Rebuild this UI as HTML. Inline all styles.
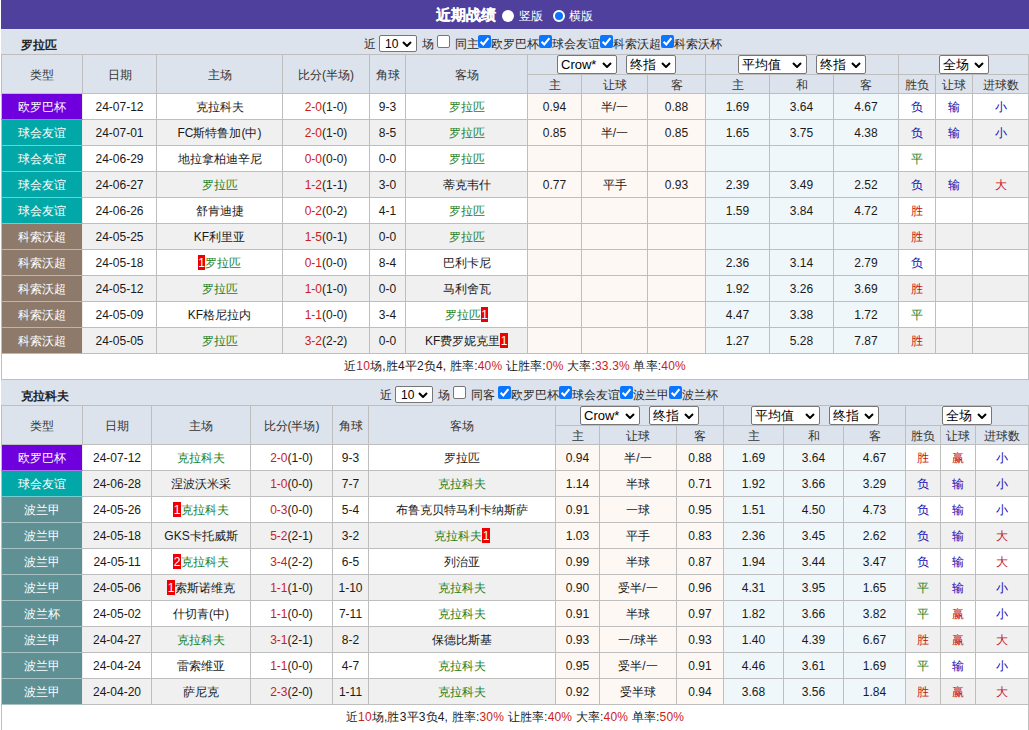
<!DOCTYPE html>
<html><head><meta charset="utf-8"><style>
*{margin:0;padding:0;box-sizing:border-box}
html,body{background:#fff;width:1029px;height:730px;overflow:hidden;position:relative}
body{font-family:"Liberation Sans",sans-serif;font-size:12px;color:#1a1a1a}
.a{position:absolute;line-height:12px;white-space:nowrap;color:#2a2a2a}
.a b{color:#222}
.top{position:absolute;left:1px;top:0;width:1028px;height:30px;background:#50409d;border-bottom:1px solid #e4e4ff}
.tt{font-size:15px;color:#fff}
.tt b{color:#fff;-webkit-text-stroke:0.2px #fff}
.tw{color:#fff}
.rd0,.rd1{width:12px;height:12px;border-radius:50%;background:#fff}
.rd1{background:#0a75ff;border:2px solid #fff}
.sec{position:absolute;left:1px;width:1028px;background:#dde3ec}
.sel{display:inline-block;height:19px;border:1px solid #767676;border-radius:2px;background:#fff;vertical-align:top;line-height:17px;padding-left:3px;text-align:left;position:relative;font-size:13px;color:#000}
.a.sel{position:absolute}
.sel .chev{position:absolute;right:4px;top:6px}
.sel.sm{font-size:12px;line-height:17px;padding-left:5px}
.sel.sm .chev{right:4px;top:5px}
.cb{width:13px;height:13px;border:1px solid #767676;border-radius:2px;background:#fff}
.cb.on{background:#0a75ff;border:0}
.cb svg{position:absolute;left:0;top:0}
table.t{position:absolute;left:1px;border-collapse:collapse;table-layout:fixed;width:1028px}
.t td{border:1px solid #bebebe;text-align:center;height:26px;padding:0;white-space:nowrap;overflow:hidden;line-height:12px}
.t tr.h1 td{background:#dde3ec;height:20px;vertical-align:top;color:#333}
.t tr.h1 td[rowspan]{vertical-align:middle;padding-top:2px}
.t tr.h2 td{background:#dde3ec;height:19px;padding-top:2px;color:#333}
.t tr.alt td{background:#f0f0f0}
.t td.ty{color:#fff;border-right-color:#ececec}
.t td.oa,.t tr.alt td.oa{background:#fdf8f4}
.t td.oe,.t tr.alt td.oe{background:#f0f7fb}
.gr,.rd{color:#1e801e}
.sc,em{font-style:normal;color:#cc1c1c}
.rw{color:#c81010}
.rl{color:#0c0cb4}
.bd{font-style:normal;background:#e00;color:#fff;padding:1px 0.5px 0}
.sum{position:absolute;left:1px;width:1028px;height:26px;line-height:25px;text-align:center;background:#fff;border-left:1px solid #bebebe;border-right:1px solid #bebebe;border-bottom:1px solid #bebebe;letter-spacing:0.18px}

</style></head><body>
<div class="top"></div><span class="a tt" style="left:436px;top:9px"><b>近期战绩</b></span><span class="a rd0" style="left:502px;top:10px"></span><span class="a tw" style="left:519px;top:10px">竖版</span><span class="a rd1" style="left:553px;top:10px"></span><span class="a tw" style="left:569px;top:10px">横版</span>
<div class="sec" style="top:30px;height:24px"></div>
<span class="a" style="left:21px;top:39px"><b>罗拉匹</b></span><span class="a" style="left:364px;top:38px">近</span><span class="a sel sm" style="left:379px;top:35px;width:38px;height:17px">10<svg class="chev" width="10" height="6" viewBox="0 0 10 6"><path d="M1 1L5 5L9 1" fill="none" stroke="#000" stroke-width="2"/></svg></span><span class="a" style="left:422px;top:38px">场</span><span class="a cb" style="left:437px;top:35px"></span><span class="a" style="left:455px;top:38px">同主</span><span class="a cb on" style="left:478px;top:35px"><svg width="13" height="13" viewBox="0 0 13 13"><path d="M2.6 6.8L5.3 9.5L10.4 3.2" fill="none" stroke="#fff" stroke-width="2.1"/></svg></span><span class="a" style="left:491px;top:38px">欧罗巴杯</span><span class="a cb on" style="left:539px;top:35px"><svg width="13" height="13" viewBox="0 0 13 13"><path d="M2.6 6.8L5.3 9.5L10.4 3.2" fill="none" stroke="#fff" stroke-width="2.1"/></svg></span><span class="a" style="left:552px;top:38px">球会友谊</span><span class="a cb on" style="left:600px;top:35px"><svg width="13" height="13" viewBox="0 0 13 13"><path d="M2.6 6.8L5.3 9.5L10.4 3.2" fill="none" stroke="#fff" stroke-width="2.1"/></svg></span><span class="a" style="left:613px;top:38px">科索沃超</span><span class="a cb on" style="left:661px;top:35px"><svg width="13" height="13" viewBox="0 0 13 13"><path d="M2.6 6.8L5.3 9.5L10.4 3.2" fill="none" stroke="#fff" stroke-width="2.1"/></svg></span><span class="a" style="left:674px;top:38px">科索沃杯</span>
<table class="t" style="top:54px"><colgroup><col style="width:81px"><col style="width:74px"><col style="width:126px"><col style="width:87px"><col style="width:36px"><col style="width:122px"><col style="width:54px"><col style="width:66px"><col style="width:58px"><col style="width:64px"><col style="width:64px"><col style="width:65px"><col style="width:37px"><col style="width:37px"><col style="width:56px"></colgroup>
<tr class="h1"><td rowspan="2">类型</td><td rowspan="2">日期</td><td rowspan="2">主场</td><td rowspan="2">比分(半场)</td><td rowspan="2">角球</td><td rowspan="2">客场</td><td colspan="3"><span class="sel" style="width:60px">Crow*<svg class="chev" width="10" height="6" viewBox="0 0 10 6"><path d="M1 1L5 5L9 1" fill="none" stroke="#000" stroke-width="2"/></svg></span><span class="sel" style="width:50px;margin-left:9px">终指<svg class="chev" width="10" height="6" viewBox="0 0 10 6"><path d="M1 1L5 5L9 1" fill="none" stroke="#000" stroke-width="2"/></svg></span></td><td colspan="3"><span class="sel" style="width:69px">平均值<svg class="chev" width="10" height="6" viewBox="0 0 10 6"><path d="M1 1L5 5L9 1" fill="none" stroke="#000" stroke-width="2"/></svg></span><span class="sel" style="width:50px;margin-left:9px">终指<svg class="chev" width="10" height="6" viewBox="0 0 10 6"><path d="M1 1L5 5L9 1" fill="none" stroke="#000" stroke-width="2"/></svg></span></td><td colspan="3"><span class="sel" style="width:50px">全场<svg class="chev" width="10" height="6" viewBox="0 0 10 6"><path d="M1 1L5 5L9 1" fill="none" stroke="#000" stroke-width="2"/></svg></span></td></tr>
<tr class="h2"><td>主</td><td>让球</td><td>客</td><td>主</td><td>和</td><td>客</td><td>胜负</td><td>让球</td><td>进球数</td></tr>
<tr>
<td class="ty" style="background:#6f00dd;border-bottom-color:#af72ec">欧罗巴杯</td>
<td>24-07-12</td>
<td>克拉科夫</td>
<td><span class="sc">2-0</span>(1-0)</td>
<td>9-3</td>
<td><span class="gr">罗拉匹</span></td>
<td class="oa">0.94</td>
<td class="oa">半/一</td>
<td class="oa">0.88</td>
<td class="oe">1.69</td>
<td class="oe">3.64</td>
<td class="oe">4.67</td>
<td><span class="rl">负</span></td>
<td><span class="rl">输</span></td>
<td><span class="rl">小</span></td>
</tr>
<tr class="alt">
<td class="ty" style="background:#02a8a8;border-bottom-color:#73cfcf">球会友谊</td>
<td>24-07-01</td>
<td>FC斯特鲁加(中)</td>
<td><span class="sc">2-0</span>(1-0)</td>
<td>8-5</td>
<td><span class="gr">罗拉匹</span></td>
<td class="oa">0.85</td>
<td class="oa">半/一</td>
<td class="oa">0.85</td>
<td class="oe">1.65</td>
<td class="oe">3.75</td>
<td class="oe">4.38</td>
<td><span class="rl">负</span></td>
<td><span class="rl">输</span></td>
<td><span class="rl">小</span></td>
</tr>
<tr>
<td class="ty" style="background:#02a8a8;border-bottom-color:#73cfcf">球会友谊</td>
<td>24-06-29</td>
<td>地拉拿柏迪辛尼</td>
<td><span class="sc">0-0</span>(0-0)</td>
<td>0-0</td>
<td><span class="gr">罗拉匹</span></td>
<td class="oa"></td>
<td class="oa"></td>
<td class="oa"></td>
<td class="oe"></td>
<td class="oe"></td>
<td class="oe"></td>
<td><span class="rd">平</span></td>
<td></td>
<td></td>
</tr>
<tr class="alt">
<td class="ty" style="background:#02a8a8;border-bottom-color:#73cfcf">球会友谊</td>
<td>24-06-27</td>
<td><span class="gr">罗拉匹</span></td>
<td><span class="sc">1-2</span>(1-1)</td>
<td>3-0</td>
<td>蒂克韦什</td>
<td class="oa">0.77</td>
<td class="oa">平手</td>
<td class="oa">0.93</td>
<td class="oe">2.39</td>
<td class="oe">3.49</td>
<td class="oe">2.52</td>
<td><span class="rl">负</span></td>
<td><span class="rl">输</span></td>
<td><span class="rw">大</span></td>
</tr>
<tr>
<td class="ty" style="background:#02a8a8;border-bottom-color:#73cfcf">球会友谊</td>
<td>24-06-26</td>
<td>舒肯迪捷</td>
<td><span class="sc">0-2</span>(0-2)</td>
<td>4-1</td>
<td><span class="gr">罗拉匹</span></td>
<td class="oa"></td>
<td class="oa"></td>
<td class="oa"></td>
<td class="oe">1.59</td>
<td class="oe">3.84</td>
<td class="oe">4.72</td>
<td><span class="rw">胜</span></td>
<td></td>
<td></td>
</tr>
<tr class="alt">
<td class="ty" style="background:#8e7a6a;border-bottom-color:#c0b5ad">科索沃超</td>
<td>24-05-25</td>
<td>KF利里亚</td>
<td><span class="sc">1-5</span>(0-1)</td>
<td>0-0</td>
<td><span class="gr">罗拉匹</span></td>
<td class="oa"></td>
<td class="oa"></td>
<td class="oa"></td>
<td class="oe"></td>
<td class="oe"></td>
<td class="oe"></td>
<td><span class="rw">胜</span></td>
<td></td>
<td></td>
</tr>
<tr>
<td class="ty" style="background:#8e7a6a;border-bottom-color:#c0b5ad">科索沃超</td>
<td>24-05-18</td>
<td><i class="bd">1</i><span class="gr">罗拉匹</span></td>
<td><span class="sc">0-1</span>(0-0)</td>
<td>8-4</td>
<td>巴利卡尼</td>
<td class="oa"></td>
<td class="oa"></td>
<td class="oa"></td>
<td class="oe">2.36</td>
<td class="oe">3.14</td>
<td class="oe">2.79</td>
<td><span class="rl">负</span></td>
<td></td>
<td></td>
</tr>
<tr class="alt">
<td class="ty" style="background:#8e7a6a;border-bottom-color:#c0b5ad">科索沃超</td>
<td>24-05-12</td>
<td><span class="gr">罗拉匹</span></td>
<td><span class="sc">1-0</span>(1-0)</td>
<td>0-0</td>
<td>马利舍瓦</td>
<td class="oa"></td>
<td class="oa"></td>
<td class="oa"></td>
<td class="oe">1.92</td>
<td class="oe">3.26</td>
<td class="oe">3.69</td>
<td><span class="rw">胜</span></td>
<td></td>
<td></td>
</tr>
<tr>
<td class="ty" style="background:#8e7a6a;border-bottom-color:#c0b5ad">科索沃超</td>
<td>24-05-09</td>
<td>KF格尼拉内</td>
<td><span class="sc">1-1</span>(0-0)</td>
<td>3-4</td>
<td><span class="gr">罗拉匹</span><i class="bd">1</i></td>
<td class="oa"></td>
<td class="oa"></td>
<td class="oa"></td>
<td class="oe">4.47</td>
<td class="oe">3.38</td>
<td class="oe">1.72</td>
<td><span class="rd">平</span></td>
<td></td>
<td></td>
</tr>
<tr class="alt">
<td class="ty" style="background:#8e7a6a;border-bottom-color:#c0b5ad">科索沃超</td>
<td>24-05-05</td>
<td><span class="gr">罗拉匹</span></td>
<td><span class="sc">3-2</span>(2-2)</td>
<td>0-0</td>
<td>KF费罗妮克里<i class="bd">1</i></td>
<td class="oa"></td>
<td class="oa"></td>
<td class="oa"></td>
<td class="oe">1.27</td>
<td class="oe">5.28</td>
<td class="oe">7.87</td>
<td><span class="rw">胜</span></td>
<td></td>
<td></td>
</tr>
</table>
<div class="sum" style="top:354px">近<em>10</em>场,胜4平2负4, 胜率:<em>40%</em> 让胜率:<em>0%</em> 大率:<em>33.3%</em> 单率:<em>40%</em></div>
<div class="sec" style="top:380px;height:25px"></div>
<span class="a" style="left:21px;top:390px"><b>克拉科夫</b></span><span class="a" style="left:380px;top:389px">近</span><span class="a sel sm" style="left:395px;top:386px;width:38px;height:17px">10<svg class="chev" width="10" height="6" viewBox="0 0 10 6"><path d="M1 1L5 5L9 1" fill="none" stroke="#000" stroke-width="2"/></svg></span><span class="a" style="left:438px;top:389px">场</span><span class="a cb" style="left:453px;top:386px"></span><span class="a" style="left:471px;top:389px">同客</span><span class="a cb on" style="left:498px;top:386px"><svg width="13" height="13" viewBox="0 0 13 13"><path d="M2.6 6.8L5.3 9.5L10.4 3.2" fill="none" stroke="#fff" stroke-width="2.1"/></svg></span><span class="a" style="left:511px;top:389px">欧罗巴杯</span><span class="a cb on" style="left:559px;top:386px"><svg width="13" height="13" viewBox="0 0 13 13"><path d="M2.6 6.8L5.3 9.5L10.4 3.2" fill="none" stroke="#fff" stroke-width="2.1"/></svg></span><span class="a" style="left:572px;top:389px">球会友谊</span><span class="a cb on" style="left:620px;top:386px"><svg width="13" height="13" viewBox="0 0 13 13"><path d="M2.6 6.8L5.3 9.5L10.4 3.2" fill="none" stroke="#fff" stroke-width="2.1"/></svg></span><span class="a" style="left:633px;top:389px">波兰甲</span><span class="a cb on" style="left:669px;top:386px"><svg width="13" height="13" viewBox="0 0 13 13"><path d="M2.6 6.8L5.3 9.5L10.4 3.2" fill="none" stroke="#fff" stroke-width="2.1"/></svg></span><span class="a" style="left:682px;top:389px">波兰杯</span>
<table class="t" style="top:405px"><colgroup><col style="width:81px"><col style="width:69px"><col style="width:99px"><col style="width:82px"><col style="width:36px"><col style="width:187px"><col style="width:44px"><col style="width:77px"><col style="width:47px"><col style="width:60px"><col style="width:60px"><col style="width:62px"><col style="width:35px"><col style="width:35px"><col style="width:53px"></colgroup>
<tr class="h1"><td rowspan="2">类型</td><td rowspan="2">日期</td><td rowspan="2">主场</td><td rowspan="2">比分(半场)</td><td rowspan="2">角球</td><td rowspan="2">客场</td><td colspan="3"><span class="sel" style="width:60px">Crow*<svg class="chev" width="10" height="6" viewBox="0 0 10 6"><path d="M1 1L5 5L9 1" fill="none" stroke="#000" stroke-width="2"/></svg></span><span class="sel" style="width:50px;margin-left:9px">终指<svg class="chev" width="10" height="6" viewBox="0 0 10 6"><path d="M1 1L5 5L9 1" fill="none" stroke="#000" stroke-width="2"/></svg></span></td><td colspan="3"><span class="sel" style="width:69px">平均值<svg class="chev" width="10" height="6" viewBox="0 0 10 6"><path d="M1 1L5 5L9 1" fill="none" stroke="#000" stroke-width="2"/></svg></span><span class="sel" style="width:50px;margin-left:9px">终指<svg class="chev" width="10" height="6" viewBox="0 0 10 6"><path d="M1 1L5 5L9 1" fill="none" stroke="#000" stroke-width="2"/></svg></span></td><td colspan="3"><span class="sel" style="width:50px">全场<svg class="chev" width="10" height="6" viewBox="0 0 10 6"><path d="M1 1L5 5L9 1" fill="none" stroke="#000" stroke-width="2"/></svg></span></td></tr>
<tr class="h2"><td>主</td><td>让球</td><td>客</td><td>主</td><td>和</td><td>客</td><td>胜负</td><td>让球</td><td>进球数</td></tr>
<tr>
<td class="ty" style="background:#6f00dd;border-bottom-color:#af72ec">欧罗巴杯</td>
<td>24-07-12</td>
<td><span class="gr">克拉科夫</span></td>
<td><span class="sc">2-0</span>(1-0)</td>
<td>9-3</td>
<td>罗拉匹</td>
<td class="oa">0.94</td>
<td class="oa">半/一</td>
<td class="oa">0.88</td>
<td class="oe">1.69</td>
<td class="oe">3.64</td>
<td class="oe">4.67</td>
<td><span class="rw">胜</span></td>
<td><span class="rw">赢</span></td>
<td><span class="rl">小</span></td>
</tr>
<tr class="alt">
<td class="ty" style="background:#02a8a8;border-bottom-color:#73cfcf">球会友谊</td>
<td>24-06-28</td>
<td>涅波沃米采</td>
<td><span class="sc">1-0</span>(0-0)</td>
<td>7-7</td>
<td><span class="gr">克拉科夫</span></td>
<td class="oa">1.14</td>
<td class="oa">半球</td>
<td class="oa">0.71</td>
<td class="oe">1.92</td>
<td class="oe">3.66</td>
<td class="oe">3.29</td>
<td><span class="rl">负</span></td>
<td><span class="rl">输</span></td>
<td><span class="rl">小</span></td>
</tr>
<tr>
<td class="ty" style="background:#5f9194;border-bottom-color:#a7c2c4">波兰甲</td>
<td>24-05-26</td>
<td><i class="bd">1</i><span class="gr">克拉科夫</span></td>
<td><span class="sc">0-3</span>(0-0)</td>
<td>5-4</td>
<td>布鲁克贝特马利卡纳斯萨</td>
<td class="oa">0.91</td>
<td class="oa">一球</td>
<td class="oa">0.95</td>
<td class="oe">1.51</td>
<td class="oe">4.50</td>
<td class="oe">4.73</td>
<td><span class="rl">负</span></td>
<td><span class="rl">输</span></td>
<td><span class="rl">小</span></td>
</tr>
<tr class="alt">
<td class="ty" style="background:#5f9194;border-bottom-color:#a7c2c4">波兰甲</td>
<td>24-05-18</td>
<td>GKS卡托威斯</td>
<td><span class="sc">5-2</span>(2-1)</td>
<td>3-2</td>
<td><span class="gr">克拉科夫</span><i class="bd">1</i></td>
<td class="oa">1.03</td>
<td class="oa">平手</td>
<td class="oa">0.83</td>
<td class="oe">2.36</td>
<td class="oe">3.45</td>
<td class="oe">2.62</td>
<td><span class="rl">负</span></td>
<td><span class="rl">输</span></td>
<td><span class="rw">大</span></td>
</tr>
<tr>
<td class="ty" style="background:#5f9194;border-bottom-color:#a7c2c4">波兰甲</td>
<td>24-05-11</td>
<td><i class="bd">2</i><span class="gr">克拉科夫</span></td>
<td><span class="sc">3-4</span>(2-2)</td>
<td>6-5</td>
<td>列治亚</td>
<td class="oa">0.99</td>
<td class="oa">半球</td>
<td class="oa">0.87</td>
<td class="oe">1.94</td>
<td class="oe">3.44</td>
<td class="oe">3.47</td>
<td><span class="rl">负</span></td>
<td><span class="rl">输</span></td>
<td><span class="rw">大</span></td>
</tr>
<tr class="alt">
<td class="ty" style="background:#5f9194;border-bottom-color:#a7c2c4">波兰甲</td>
<td>24-05-06</td>
<td><i class="bd">1</i>索斯诺维克</td>
<td><span class="sc">1-1</span>(1-0)</td>
<td>1-10</td>
<td><span class="gr">克拉科夫</span></td>
<td class="oa">0.90</td>
<td class="oa">受半/一</td>
<td class="oa">0.96</td>
<td class="oe">4.31</td>
<td class="oe">3.95</td>
<td class="oe">1.65</td>
<td><span class="rd">平</span></td>
<td><span class="rl">输</span></td>
<td><span class="rl">小</span></td>
</tr>
<tr>
<td class="ty" style="background:#5f9194;border-bottom-color:#a7c2c4">波兰杯</td>
<td>24-05-02</td>
<td>什切青(中)</td>
<td><span class="sc">1-1</span>(0-0)</td>
<td>7-11</td>
<td><span class="gr">克拉科夫</span></td>
<td class="oa">0.91</td>
<td class="oa">半球</td>
<td class="oa">0.97</td>
<td class="oe">1.82</td>
<td class="oe">3.66</td>
<td class="oe">3.82</td>
<td><span class="rd">平</span></td>
<td><span class="rw">赢</span></td>
<td><span class="rl">小</span></td>
</tr>
<tr class="alt">
<td class="ty" style="background:#5f9194;border-bottom-color:#a7c2c4">波兰甲</td>
<td>24-04-27</td>
<td><span class="gr">克拉科夫</span></td>
<td><span class="sc">3-1</span>(2-1)</td>
<td>8-2</td>
<td>保德比斯基</td>
<td class="oa">0.93</td>
<td class="oa">一/球半</td>
<td class="oa">0.93</td>
<td class="oe">1.40</td>
<td class="oe">4.39</td>
<td class="oe">6.67</td>
<td><span class="rw">胜</span></td>
<td><span class="rw">赢</span></td>
<td><span class="rw">大</span></td>
</tr>
<tr>
<td class="ty" style="background:#5f9194;border-bottom-color:#a7c2c4">波兰甲</td>
<td>24-04-24</td>
<td>雷索维亚</td>
<td><span class="sc">1-1</span>(0-0)</td>
<td>4-7</td>
<td><span class="gr">克拉科夫</span></td>
<td class="oa">0.95</td>
<td class="oa">受半/一</td>
<td class="oa">0.91</td>
<td class="oe">4.46</td>
<td class="oe">3.61</td>
<td class="oe">1.69</td>
<td><span class="rd">平</span></td>
<td><span class="rl">输</span></td>
<td><span class="rl">小</span></td>
</tr>
<tr class="alt">
<td class="ty" style="background:#5f9194;border-bottom-color:#a7c2c4">波兰甲</td>
<td>24-04-20</td>
<td>萨尼克</td>
<td><span class="sc">2-3</span>(2-0)</td>
<td>1-11</td>
<td><span class="gr">克拉科夫</span></td>
<td class="oa">0.92</td>
<td class="oa">受半球</td>
<td class="oa">0.94</td>
<td class="oe">3.68</td>
<td class="oe">3.56</td>
<td class="oe">1.84</td>
<td><span class="rw">胜</span></td>
<td><span class="rw">赢</span></td>
<td><span class="rw">大</span></td>
</tr>
</table>
<div class="sum" style="top:705px">近<em>10</em>场,胜3平3负4, 胜率:<em>30%</em> 让胜率:<em>40%</em> 大率:<em>40%</em> 单率:<em>50%</em></div>
</body></html>
